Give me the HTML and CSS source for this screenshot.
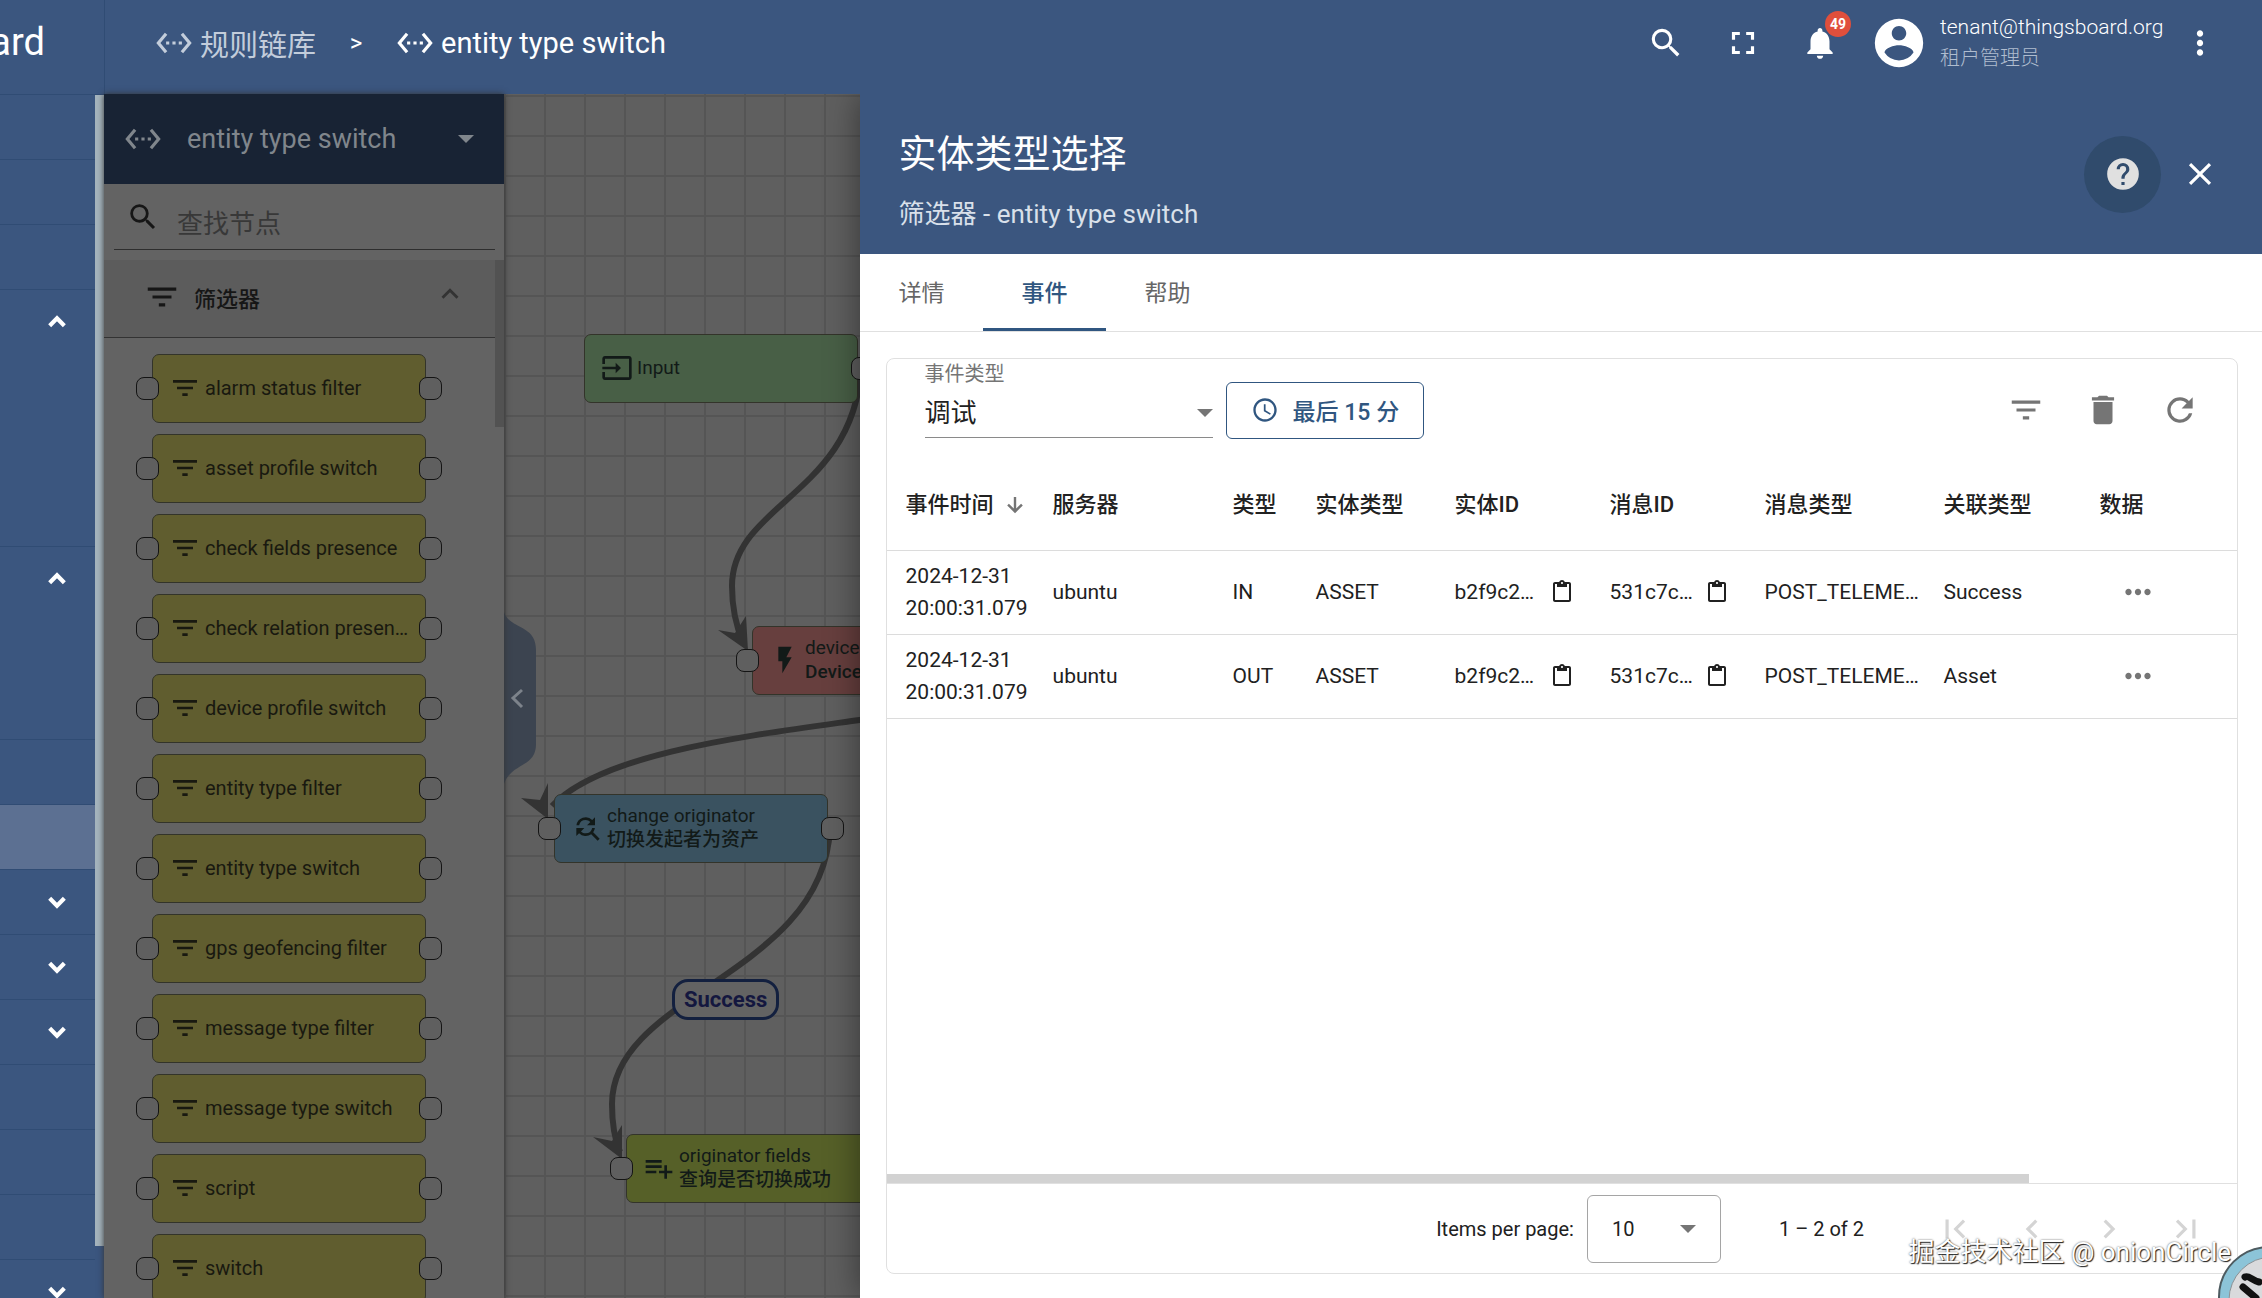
FILE: index.html
```html
<!DOCTYPE html>
<html lang="zh-CN">
<head>
<meta charset="utf-8">
<title>entity type switch</title>
<meta name="viewport" content="width=device-width, initial-scale=1">
<link rel="stylesheet" href="styles.css">
</head>
<body>
<svg class="sprite" aria-hidden="true">
  <symbol id="i-chain" viewBox="0 0 24 24"><path d="M7.77 6.76 6.23 5.48.82 12l5.41 6.52 1.54-1.28L3.42 12l4.35-5.24zM7 13h2v-2H7v2zm10-2h-2v2h2v-2zm-6 2h2v-2h-2v2zm6.77-7.52-1.54 1.28L20.58 12l-4.35 5.24 1.54 1.28L23.18 12l-5.41-6.52z"/></symbol>
  <symbol id="i-search" viewBox="0 0 24 24"><path d="M15.5 14h-.79l-.28-.27A6.47 6.47 0 0 0 16 9.5 6.5 6.5 0 1 0 9.5 16c1.61 0 3.09-.59 4.23-1.57l.27.28v.79l5 4.99L20.49 19l-4.99-5zm-6 0C7.01 14 5 11.99 5 9.5S7.01 5 9.5 5 14 7.01 14 9.5 11.99 14 9.5 14z"/></symbol>
  <symbol id="i-full" viewBox="0 0 24 24"><path d="M7 14H5v5h5v-2H7v-3zm-2-4h2V7h3V5H5v5zm12 7h-3v2h5v-5h-2v3zM14 5v2h3v3h2V5h-5z"/></symbol>
  <symbol id="i-bell" viewBox="0 0 24 24"><path d="M12 22c1.1 0 2-.9 2-2h-4c0 1.1.89 2 2 2zm6-6v-5c0-3.07-1.64-5.64-4.5-6.32V4c0-.83-.67-1.5-1.5-1.5s-1.5.67-1.5 1.5v.68C7.63 5.36 6 7.92 6 11v5l-2 2v1h16v-1l-2-2z"/></symbol>
  <symbol id="i-user" viewBox="0 0 24 24"><path d="M12 2a10 10 0 1 0 0 20 10 10 0 0 0 0-20zm0 3c1.66 0 3 1.34 3 3s-1.34 3-3 3-3-1.34-3-3 1.34-3 3-3zm0 14.2a7.2 7.2 0 0 1-6-3.22c.03-1.99 4-3.08 6-3.08 1.99 0 5.97 1.09 6 3.08a7.2 7.2 0 0 1-6 3.22z"/></symbol>
  <symbol id="i-more" viewBox="0 0 24 24"><path d="M12 8c1.1 0 2-.9 2-2s-.9-2-2-2-2 .9-2 2 .9 2 2 2zm0 2c-1.1 0-2 .9-2 2s.9 2 2 2 2-.9 2-2-.9-2-2-2zm0 6c-1.1 0-2 .9-2 2s.9 2 2 2 2-.9 2-2-.9-2-2-2z"/></symbol>
  <symbol id="i-dots" viewBox="0 0 24 24"><path d="M6 10c-1.1 0-2 .9-2 2s.9 2 2 2 2-.9 2-2-.9-2-2-2zm12 0c-1.1 0-2 .9-2 2s.9 2 2 2 2-.9 2-2-.9-2-2-2zm-6 0c-1.1 0-2 .9-2 2s.9 2 2 2 2-.9 2-2-.9-2-2-2z"/></symbol>
  <symbol id="i-help" viewBox="0 0 24 24"><path d="M12 2a10 10 0 1 0 0 20 10 10 0 0 0 0-20zm1 17h-2v-2h2v2zm2.07-7.75-.9.92C13.45 12.9 13 13.5 13 15h-2v-.5c0-1.1.45-2.1 1.17-2.83l1.24-1.26c.37-.36.59-.86.59-1.41a2 2 0 1 0-4 0H8a4 4 0 1 1 8 0c0 .88-.36 1.68-.93 2.25z"/></symbol>
  <symbol id="i-close" viewBox="0 0 24 24"><path d="M19 6.41 17.59 5 12 10.59 6.41 5 5 6.41 10.59 12 5 17.59 6.41 19 12 13.41 17.59 19 19 17.59 13.41 12z"/></symbol>
  <symbol id="i-filter" viewBox="0 0 24 24"><path d="M10 18h4v-2h-4v2zM3 6v2h18V6H3zm3 7h12v-2H6v2z"/></symbol>
  <symbol id="i-trash" viewBox="0 0 24 24"><path d="M6 19c0 1.1.9 2 2 2h8c1.1 0 2-.9 2-2V7H6v12zM19 4h-3.5l-1-1h-5l-1 1H5v2h14V4z"/></symbol>
  <symbol id="i-refresh" viewBox="0 0 24 24"><path d="M17.65 6.35A7.96 7.96 0 0 0 12 4a8 8 0 1 0 7.73 10h-2.08A6 6 0 1 1 12 6c1.66 0 3.14.69 4.22 1.78L13 11h7V4l-2.35 2.35z"/></symbol>
  <symbol id="i-clock" viewBox="0 0 24 24"><path d="M11.99 2C6.47 2 2 6.48 2 12s4.47 10 9.99 10C17.52 22 22 17.52 22 12S17.52 2 11.99 2zM12 20c-4.42 0-8-3.58-8-8s3.58-8 8-8 8 3.58 8 8-3.58 8-8 8zm.5-13H11v6l5.25 3.15.75-1.23-4.5-2.67z"/></symbol>
  <symbol id="i-sort" viewBox="0 0 24 24"><path d="M10.8 4h2.4v11.6l4.9-4.9 1.7 1.7L12 20.2l-7.8-7.8 1.7-1.7 4.9 4.9z"/></symbol>
  <symbol id="i-clip" viewBox="0 0 24 24"><path d="M19 2h-4.18C14.4.84 13.3 0 12 0S9.6.84 9.18 2H5c-1.1 0-2 .9-2 2v16c0 1.1.9 2 2 2h14c1.1 0 2-.9 2-2V4c0-1.1-.9-2-2-2zm-7 0c.55 0 1 .45 1 1s-.45 1-1 1-1-.45-1-1 .45-1 1-1zm7 18H5V4h2v3h10V4h2v16z"/></symbol>
  <symbol id="i-first" viewBox="0 0 24 24"><path d="M18.41 16.59 13.82 12l4.59-4.59L17 6l-6 6 6 6zM6 6h2v12H6z"/></symbol>
  <symbol id="i-prev" viewBox="0 0 24 24"><path d="M15.41 7.41 14 6l-6 6 6 6 1.41-1.41L10.83 12z"/></symbol>
  <symbol id="i-next" viewBox="0 0 24 24"><path d="M10 6 8.59 7.41 13.17 12l-4.58 4.59L10 18l6-6z"/></symbol>
  <symbol id="i-last" viewBox="0 0 24 24"><path d="M5.59 7.41 10.18 12l-4.59 4.59L7 18l6-6-6-6zM16 6h2v12h-2z"/></symbol>
  <symbol id="i-up" viewBox="0 0 24 24"><path d="m12 8-6 6 1.41 1.41L12 10.83l4.59 4.58L18 14z"/></symbol>
  <symbol id="i-chev-up" viewBox="0 0 24 24"><path d="m4 16 8-8 8 8" fill="none" stroke="currentColor" stroke-width="4.6"/></symbol>
  <symbol id="i-chev-down" viewBox="0 0 24 24"><path d="m4 8 8 8 8-8" fill="none" stroke="currentColor" stroke-width="4.6"/></symbol>
  <symbol id="i-input" viewBox="0 0 24 24"><path d="M21 3H3c-1.1 0-2 .9-2 2v4h2V5h18v14H3v-4H1v4c0 1.1.9 2 2 2h18c1.1 0 2-.9 2-2V5c0-1.1-.9-2-2-2zM11 16l4-4-4-4v3H1v2h10v3z"/></symbol>
  <symbol id="i-bolt" viewBox="0 0 24 24"><path d="M7 2v11h3v9l7-12h-4l4-8z"/></symbol>
  <symbol id="i-find" viewBox="0 0 24 24"><path d="M11 6c1.38 0 2.63.56 3.54 1.46L12 10h6V4l-2.05 2.05A6.98 6.98 0 0 0 4.08 10H6.1A5 5 0 0 1 11 6zm5.64 9.14A6.89 6.89 0 0 0 17.92 12H15.9A5 5 0 0 1 11 16c-1.38 0-2.63-.56-3.54-1.46L10 12H4v6l2.05-2.05A6.97 6.97 0 0 0 15.14 16.64L20 21.49 21.49 20l-4.85-4.86z"/></symbol>
  <symbol id="i-add" viewBox="0 0 24 24"><path d="M14 10H2v2h12v-2zm0-4H2v2h12V6zm4 8v-4h-2v4h-4v2h4v4h2v-4h4v-2h-4zM2 16h8v-2H2v2z"/></symbol>
</svg>

<div class="app">
  <aside class="side">
    <div class="brand"><span>ThingsBoard</span></div>
    <nav class="menu" aria-label="主菜单">
      <ul class="menu-list">
        <li class="item"></li>
        <li class="item"></li>
        <li class="item"></li>
        <li class="item group-a"><svg class="ic22"><use href="#i-chev-up"/></svg></li>
        <li class="item group-b"><svg class="ic22"><use href="#i-chev-up"/></svg></li>
        <li class="item"></li>
        <li class="item active"></li>
        <li class="item"><svg class="ic22"><use href="#i-chev-down"/></svg></li>
        <li class="item"><svg class="ic22"><use href="#i-chev-down"/></svg></li>
        <li class="item"><svg class="ic22"><use href="#i-chev-down"/></svg></li>
        <li class="item"></li>
        <li class="item"></li>
        <li class="item"></li>
        <li class="item"><svg class="ic22"><use href="#i-chev-down"/></svg></li>
      </ul>
      <div class="menu-thumb"></div>
    </nav>
  </aside>

  <div class="content">
    <header class="topbar">
      <nav class="crumbs" aria-label="breadcrumb">
        <a class="crumb faded" href="#"><svg class="ic38"><use href="#i-chain"/></svg>规则链库</a>
        <span class="gt">&gt;</span>
        <a class="crumb" href="#"><svg class="ic38"><use href="#i-chain"/></svg>entity type switch</a>
      </nav>
      <div class="tools">
        <button class="round" aria-label="搜索"><svg class="ic38"><use href="#i-search"/></svg></button>
        <button class="round" aria-label="全屏"><svg class="ic38"><use href="#i-full"/></svg></button>
        <button class="round" aria-label="通知"><svg class="ic38"><use href="#i-bell"/></svg><span class="badge">49</span></button>
        <svg class="avatar"><use href="#i-user"/></svg>
        <div class="who"><span>tenant@thingsboard.org</span><span class="role">租户管理员</span></div>
        <button class="round" aria-label="更多"><svg class="ic38"><use href="#i-more"/></svg></button>
      </div>
    </header>

    <main class="work">
      <section class="palette">
        <div class="chain-pick">
          <svg class="ic38"><use href="#i-chain"/></svg>
          <select class="chain-select" aria-label="规则链"><option>entity type switch</option></select>
          <i class="caret"></i>
        </div>
        <label class="find"><svg class="ic34"><use href="#i-search"/></svg><input type="text" placeholder="查找节点" aria-label="查找节点"></label>
        <div class="scroller">
          <div class="lib">
            <button class="cat"><svg class="ic38"><use href="#i-filter"/></svg><span>筛选器</span><svg class="ic34 cat-up"><use href="#i-up"/></svg></button>
            <ul class="types">
              <li class="type"><svg class="ic32"><use href="#i-filter"/></svg><span>alarm status filter</span></li>
              <li class="type"><svg class="ic32"><use href="#i-filter"/></svg><span>asset profile switch</span></li>
              <li class="type"><svg class="ic32"><use href="#i-filter"/></svg><span>check fields presence</span></li>
              <li class="type"><svg class="ic32"><use href="#i-filter"/></svg><span>check relation presen…</span></li>
              <li class="type"><svg class="ic32"><use href="#i-filter"/></svg><span>device profile switch</span></li>
              <li class="type"><svg class="ic32"><use href="#i-filter"/></svg><span>entity type filter</span></li>
              <li class="type"><svg class="ic32"><use href="#i-filter"/></svg><span>entity type switch</span></li>
              <li class="type"><svg class="ic32"><use href="#i-filter"/></svg><span>gps geofencing filter</span></li>
              <li class="type"><svg class="ic32"><use href="#i-filter"/></svg><span>message type filter</span></li>
              <li class="type"><svg class="ic32"><use href="#i-filter"/></svg><span>message type switch</span></li>
              <li class="type"><svg class="ic32"><use href="#i-filter"/></svg><span>script</span></li>
              <li class="type"><svg class="ic32"><use href="#i-filter"/></svg><span>switch</span></li>
            </ul>
          </div>
          <div class="lib-thumb"></div>
        </div>
      </section>

      <section class="canvas">
        <svg class="wires" aria-hidden="true">
          <g fill="none" stroke="#333" stroke-width="6">
            <path d="M357 274C350 400 228 410 228 492C228 514 232 532 239 548"/>
            <path d="M376 623C260 640 100 656 48 712"/>
            <path d="M326 734C320 880 108 900 108 1010C108 1030 110 1044 116 1058"/>
          </g>
          <g fill="#333">
            <path d="M244 557 214 536 231 539 242 522z"/>
            <path d="M44 725 17 704 36 706 44 689z"/>
            <path d="M118 1065 89 1043 108 1047 118 1031z"/>
          </g>
          <path d="M0 518C6 536 32 530 32 556V650C32 674 8 668 0 690z" fill="#3c4450"/>
          <path d="m18 596-9 8 9 9" fill="none" stroke="#7d838b" stroke-width="3"/>
        </svg>
        <div class="node n-input"><svg class="ic32"><use href="#i-input"/></svg><span>Input</span></div>
        <div class="node in n-device"><svg class="ic32"><use href="#i-bolt"/></svg><span>device<b>Device</b></span></div>
        <div class="node in n-change"><svg class="ic32"><use href="#i-find"/></svg><span>change originator<b>切换发起者为资产</b></span></div>
        <div class="node in n-fields"><svg class="ic32"><use href="#i-add"/></svg><span>originator fields<b>查询是否切换成功</b></span></div>
        <div class="wire-label">Success</div>
      </section>

      <section class="drawer">
        <header class="d-head">
          <div class="d-titles"><h1>实体类型选择</h1><p>筛选器 - entity type switch</p></div>
          <button class="round help" aria-label="帮助"><svg class="ic38"><use href="#i-help"/></svg></button>
          <button class="round" aria-label="关闭"><svg class="ic38"><use href="#i-close"/></svg></button>
        </header>
        <div class="tabs" role="tablist">
          <button class="tab" role="tab">详情</button>
          <button class="tab on" role="tab" aria-selected="true">事件</button>
          <button class="tab" role="tab">帮助</button>
        </div>
        <div class="card">
          <div class="bar">
            <div class="field">
              <label for="etype">事件类型</label>
              <div class="pick"><select id="etype"><option>调试</option></select><i class="caret"></i></div>
            </div>
            <button class="span-btn"><svg class="ic28"><use href="#i-clock"/></svg>最后 15 分</button>
            <div class="bar-tools">
              <button class="round" aria-label="过滤"><svg class="ic38"><use href="#i-filter"/></svg></button>
              <button class="round" aria-label="清除"><svg class="ic38"><use href="#i-trash"/></svg></button>
              <button class="round" aria-label="刷新"><svg class="ic38"><use href="#i-refresh"/></svg></button>
            </div>
          </div>
          <div class="table-wrap">
            <table>
              <colgroup><col class="c-time"><col class="c-server"><col class="c-kind"><col class="c-etype"><col class="c-id"><col class="c-id"><col class="c-msg"><col class="c-rel"><col></colgroup>
              <thead><tr><th><span class="cell">事件时间<svg class="ic24"><use href="#i-sort"/></svg></span></th><th>服务器</th><th>类型</th><th>实体类型</th><th>实体ID</th><th>消息ID</th><th>消息类型</th><th>关联类型</th><th>数据</th></tr></thead>
              <tbody>
                <tr><td>2024-12-31<br>20:00:31.079</td><td>ubuntu</td><td>IN</td><td>ASSET</td>
                  <td><span class="cell idc">b2f9c2…<button class="copy" aria-label="复制"><svg class="ic24"><use href="#i-clip"/></svg></button></span></td>
                  <td><span class="cell idc">531c7c…<button class="copy" aria-label="复制"><svg class="ic24"><use href="#i-clip"/></svg></button></span></td>
                  <td>POST_TELEME…</td><td>Success</td><td><button class="round" aria-label="查看"><svg class="ic38"><use href="#i-dots"/></svg></button></td></tr>
                <tr><td>2024-12-31<br>20:00:31.079</td><td>ubuntu</td><td>OUT</td><td>ASSET</td>
                  <td><span class="cell idc">b2f9c2…<button class="copy" aria-label="复制"><svg class="ic24"><use href="#i-clip"/></svg></button></span></td>
                  <td><span class="cell idc">531c7c…<button class="copy" aria-label="复制"><svg class="ic24"><use href="#i-clip"/></svg></button></span></td>
                  <td>POST_TELEME…</td><td>Asset</td><td><button class="round" aria-label="查看"><svg class="ic38"><use href="#i-dots"/></svg></button></td></tr>
              </tbody>
            </table>
          </div>
          <div class="h-thumb"></div>
          <footer class="pager">
            <label for="psize">Items per page:</label>
            <div class="psize"><select id="psize"><option>10</option></select><i class="caret"></i></div>
            <span class="range">1 – 2 of 2</span>
            <button class="round" disabled aria-label="首页"><svg class="ic38"><use href="#i-first"/></svg></button>
            <button class="round" disabled aria-label="上一页"><svg class="ic38"><use href="#i-prev"/></svg></button>
            <button class="round" disabled aria-label="下一页"><svg class="ic38"><use href="#i-next"/></svg></button>
            <button class="round" disabled aria-label="末页"><svg class="ic38"><use href="#i-last"/></svg></button>
          </footer>
        </div>
      </section>
    </main>
  </div>
</div>
<div class="mark">掘金技术社区 @ onionCircle</div>
<svg class="bubble" viewBox="0 0 44 52" aria-hidden="true">
  <circle cx="51" cy="51" r="50" fill="#8cc4d8" stroke="#4d5b60" stroke-width="2"/>
  <circle cx="54" cy="54" r="43" fill="#d9dadc" stroke="#8b9296"/>
  <path d="M27 31C31 29 33 34 41 36M25 41 38 52" fill="none" stroke="#111" stroke-width="7" stroke-linecap="round"/>
</svg>
</body>
</html>
```
FILE: styles.css
```css
*, *::before, *::after { box-sizing: border-box; }
html, body { height: 100%; }
body {
  margin: 0;
  overflow: hidden;
  position: relative;
  font-family: Roboto, "Noto Sans CJK SC", sans-serif;
  font-size: 21px;
  color: #212121;
  background: #fff;
}
button, select, input { font: inherit; color: inherit; border: 0; background: none; padding: 0; margin: 0; }
select { appearance: none; width: 100%; outline: 0; }
ul { list-style: none; margin: 0; padding: 0; }
a { color: inherit; text-decoration: none; }
svg { fill: currentColor; flex: none; display: block; }
.sprite { position: absolute; width: 0; height: 0; }
.ic22 { width: 22px; height: 22px; }
.ic24 { width: 24px; height: 24px; }
.ic28 { width: 28px; height: 28px; }
.ic32 { width: 32px; height: 32px; }
.ic34 { width: 34px; height: 34px; }
.ic38 { width: 38px; height: 38px; }
.caret { flex: none; border: 8px solid transparent; border-top-color: currentColor; border-bottom: 0; }

.app { display: flex; height: 100%; }

/* side menu */
.side { width: 104px; flex: none; background: #3b567f; color: #fff; display: flex; flex-direction: column; }
.brand { height: 95px; flex: none; display: flex; align-items: center; justify-content: flex-end; overflow: hidden; padding: 0 59px 10px 0; font-size: 38px; border-bottom: 1px solid #304c74; }
.menu { flex: 1; min-height: 0; display: flex; overflow: hidden; }
.menu-list { flex: 1; }
.item { height: 65px; display: flex; justify-content: flex-end; padding: 21px 27px 0 0; border-bottom: 1px solid #304c74; }
.group-a { height: 257px; }
.group-b { height: 193px; }
.active { background: #5c7092; }
.menu-thumb { width: 9px; height: 1151px; background: #a5b4bd; }

.content { flex: 1; min-width: 0; display: flex; flex-direction: column; }

/* top bar */
.topbar { height: 94px; flex: none; display: flex; justify-content: space-between; align-items: center; padding: 0 24px 8px 50px; background: #3b567f; color: #fff; border-left: 1px solid #304c74; }
.crumbs { display: flex; align-items: center; font-size: 29px; }
.crumb { display: flex; align-items: center; gap: 7px; }
.faded { color: #c3cddb; }
.gt { width: 80px; text-align: center; font-size: 24px; }
.tools { display: flex; align-items: center; }
.round { width: 77px; height: 77px; display: flex; align-items: center; justify-content: center; border-radius: 50%; position: relative; flex: none; }
.badge { position: absolute; top: 6px; right: 7px; width: 26px; height: 26px; line-height: 26px; border-radius: 50%; background: #e04f3c; font-size: 14px; font-weight: 700; text-align: center; }
.avatar { width: 58px; height: 58px; margin-left: 12px; }
.who { display: flex; flex-direction: column; width: 221px; margin-left: 12px; font-size: 21px; line-height: 31px; font-weight: 300; white-space: nowrap; }
.role { font-size: 20px; color: #b0bdcf; }

/* workspace */
.work { flex: 1; min-height: 0; display: flex; position: relative; background: #5f5f5f; }
.palette { width: 400px; flex: none; display: flex; flex-direction: column; background: #636363; color: #161616; box-shadow: 0 0 6px #333; z-index: 1; }
.chain-pick { height: 90px; flex: none; display: flex; align-items: center; padding: 0 30px 0 20px; gap: 25px; background: #182334; color: #80868c; font-size: 27px; }
.find { height: 66px; flex: none; display: flex; align-items: center; gap: 17px; margin: 0 9px 0 10px; padding: 0 12px; border-bottom: 1px solid #2e2e2e; }
.find input { flex: 1; min-width: 0; font-size: 26px; padding-top: 14px; outline: 0; }
.find input::placeholder { color: #383838; opacity: 1; }
.scroller { flex: 1; min-height: 0; display: flex; margin-top: 10px; overflow: hidden; }
.lib { flex: 1; }
.lib-thumb { width: 9px; height: 167px; background: #525252; }
.cat { width: 100%; height: 78px; display: flex; align-items: center; padding: 0 28px 4px 39px; gap: 13px; background: #5c5c5c; border-bottom: 1px solid #333; font-size: 22px; font-weight: 500; }
.cat-up { margin: 0 0 6px auto; color: #333; }
.types { display: flex; flex-direction: column; gap: 11px; padding: 16px 0 0 48px; }
.type, .node { width: 274px; height: 69px; display: flex; align-items: center; border: 1px solid #33342a; border-radius: 7px; position: relative; white-space: nowrap; color: #191910; }
.type { padding: 0 0 2px 16px; gap: 4px; background: #605d2f; font-size: 20px; }
.type::before, .type::after, .in::before, .node::after { content: ""; position: absolute; top: 22px; width: 23px; height: 23px; border: 1px solid #141414; border-radius: 8px; background: #5f5f5f; }
.type::before, .in::before { left: -17px; }
.type::after, .node::after { right: -17px; }

/* rule chain canvas */
.canvas { flex: 1; min-width: 0; position: relative; overflow: hidden;
  background-color: #5f5f5f;
  background-image: linear-gradient(90deg, #555 2px, transparent 2px), linear-gradient(#555 2px, transparent 2px);
  background-size: 40px 40px; background-position: 0 0, 0 1px; }
.wires { position: absolute; inset: 0; width: 100%; height: 100%; }
.node { position: absolute; padding: 0 0 2px 16px; gap: 4px; font-size: 19px; line-height: 24px; color: #121a18; }
.node b { display: block; font-weight: 500; }
.n-input { left: 80px; top: 240px; background: #485f46; }
.n-device { left: 248px; top: 532px; background: #673f3e; }
.n-change { left: 50px; top: 700px; background: #3a5260; }
.n-fields { left: 122px; top: 1040px; background: #566028; }
.wire-label { position: absolute; left: 168px; top: 885px; height: 41px; padding: 0 9px; border: 3px solid #13203f; border-radius: 16px; background: #636363; color: #14173f; font-size: 22px; font-weight: 700; line-height: 35px; }

/* details drawer, slides over the canvas */
.drawer { position: absolute; inset: 0 0 0 auto; width: 62vw; z-index: 2; display: flex; flex-direction: column; background: #fff; box-shadow: 0 0 32px rgba(0, 0, 0, .45); clip-path: inset(0 0 0 -48px); }
.d-head { height: 160px; flex: none; display: flex; align-items: center; padding: 0 24px 0 39px; background: #3b567f; color: #fff; }
.d-titles { flex: 1; padding-top: 10px; }
.d-titles h1 { margin: 0; font-size: 38px; line-height: 56px; font-weight: 400; }
.d-titles p { margin: 14px 0 0; font-size: 26px; line-height: 36px; color: #d9e0ea; }
.help { background: #304b6c; color: #e0e0e0; }
.tabs { height: 78px; flex: none; display: flex; border-bottom: 1px solid #e0e0e0; }
.tab { padding: 0 38px 0 39px; font-size: 23px; color: #666; border-bottom: 3px solid transparent; font-weight: 400; }
.on { color: #305680; border-bottom-color: #305680; font-weight: 500; }
.card { flex: 1; min-height: 0; margin: 26px 24px 24px 26px; border: 1px solid #e0e0e0; border-radius: 8px; display: flex; flex-direction: column; }
.bar { height: 102px; flex: none; display: flex; align-items: center; padding: 0 19px 0 38px; }
.field { width: 288px; height: 100px; margin-right: 13px; }
.field label { display: block; font-size: 20px; line-height: 28px; color: #757575; }
.pick { height: 50px; display: flex; align-items: center; border-bottom: 1px solid #8a8a8a; font-size: 26px; }
.pick .caret, .psize .caret { color: #757575; }
.span-btn { height: 57px; padding: 0 24px; display: flex; align-items: center; gap: 14px; border: 1px solid #305680; border-radius: 6px; color: #305680; font-size: 23px; font-weight: 500; }
.bar-tools { margin-left: auto; display: flex; color: #757575; }
.table-wrap { flex: 1; min-height: 0; overflow: hidden; }
table { width: 100%; border-collapse: collapse; table-layout: fixed; line-height: 32px; }
th { height: 89px; text-align: left; font-size: 22px; font-weight: 500; }
td { height: 84px; }
th, td { padding: 0; border-bottom: 1px solid #dcdcdc; white-space: nowrap; }
th:first-child, td:first-child { padding-left: 19px; }
td .round { color: #757575; }
.c-time { width: 166px; } .c-server { width: 180px; } .c-kind { width: 83px; } .c-etype { width: 139px; }
.c-id { width: 155px; } .c-msg { width: 179px; } .c-rel { width: 156px; }
.cell { display: flex; align-items: center; gap: 9px; }
.cell > svg { color: #757575; }
.idc { justify-content: space-between; width: 119px; }
.h-thumb { width: 1142px; max-width: 100%; height: 9px; background: #d2d2d2; }
.pager { height: 90px; flex: none; display: flex; align-items: center; padding: 0 13px; justify-content: flex-end; border-top: 1px solid #e0e0e0; font-size: 20px; }
.psize { width: 134px; height: 68px; margin: 0 58px 0 13px; padding: 0 24px; display: flex; align-items: center; border: 1px solid #a5a5a5; border-radius: 6px; }
.range { margin-right: 52px; }
.pager .round { color: #d4d4d4; }

.mark { position: absolute; right: 31px; bottom: 28px; z-index: 3; font-size: 26px; line-height: 36px; color: #fff; text-shadow: 1px 1px 1px #222, 0 0 2px #555; }
.bubble { position: absolute; right: 0; bottom: 0; z-index: 4; width: 44px; height: 52px; }
```
